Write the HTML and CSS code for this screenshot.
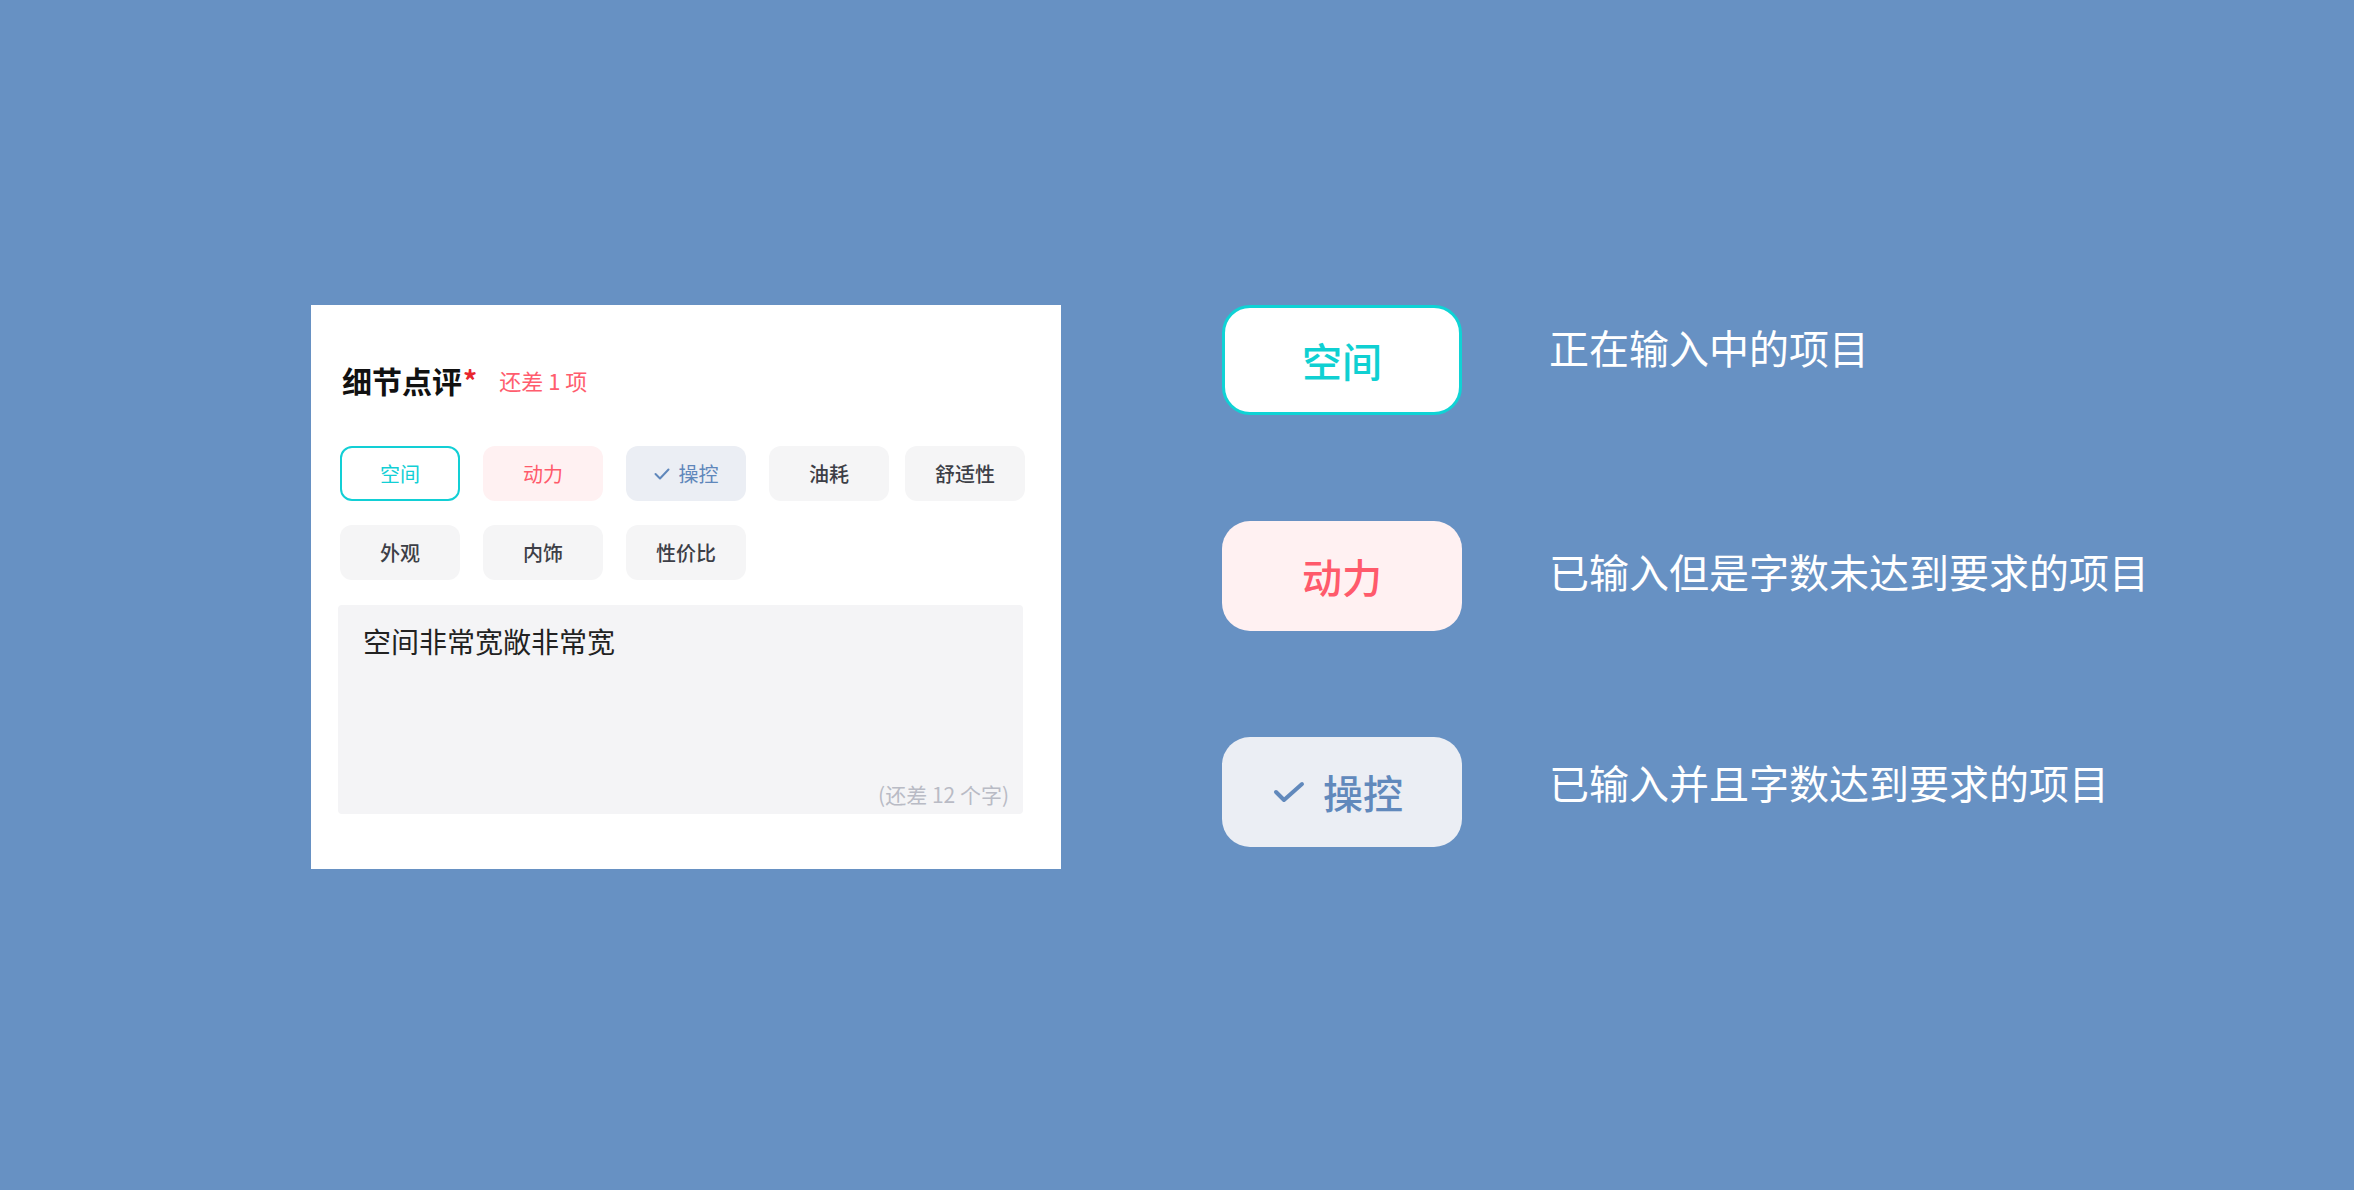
FILE: index.html
```html
<!DOCTYPE html>
<html lang="zh-CN">
<head>
<meta charset="utf-8">
<title>细节点评</title>
<link rel="stylesheet" href="styles.css">
</head>
<body>
<main class="page">
  <section class="card">
    <div class="card-title">
      <span class="title-main">细节点评</span><span class="title-star">*</span>
      <span class="title-hint">还差 1 项</span>
    </div>
    <div class="tags">
      <span class="tag tag-active">空间</span>
      <span class="tag tag-short">动力</span>
      <span class="tag tag-done"><svg class="check" width="16" height="12" viewBox="0 0 16 12"><polyline points="1.5,6 6,10.5 14.5,1.5" fill="none" stroke="currentColor" stroke-width="2" stroke-linecap="round" stroke-linejoin="round"/></svg>操控</span>
      <span class="tag">油耗</span>
      <span class="tag tag-last">舒适性</span>
      <span class="tag">外观</span>
      <span class="tag">内饰</span>
      <span class="tag">性价比</span>
    </div>
    <div class="input-box">
      <div class="input-text">空间非常宽敞非常宽</div>
      <div class="input-count">(还差 12 个字)</div>
    </div>
  </section>

  <section class="legend">
    <div class="legend-row row-1">
      <span class="big-tag big-active">空间</span>
      <span class="legend-text">正在输入中的项目</span>
    </div>
    <div class="legend-row row-2">
      <span class="big-tag big-short">动力</span>
      <span class="legend-text">已输入但是字数未达到要求的项目</span>
    </div>
    <div class="legend-row row-3">
      <span class="big-tag big-done"><svg class="big-check" width="32" height="22" viewBox="0 0 32 22"><polyline points="3,11 11,19 29,3" fill="none" stroke="currentColor" stroke-width="4" stroke-linecap="round" stroke-linejoin="round"/></svg>操控</span>
      <span class="legend-text">已输入并且字数达到要求的项目</span>
    </div>
  </section>
</main>
</body>
</html>
```
FILE: styles.css
```css
html, body {
  margin: 0;
  padding: 0;
}
body {
  width: 2354px;
  height: 1190px;
  background: #6791c3;
  font-family: "Noto Sans CJK SC", "Noto Sans", sans-serif;
  overflow: hidden;
}
.page {
  display: flex;
  align-items: flex-start;
  padding: 305px 0 0 311px;
}

/* ---------- card ---------- */
.card {
  width: 750px;
  box-sizing: border-box;
  background: #ffffff;
  padding: 55px 28px 55px 27px;
}
.card-title {
  display: flex;
  align-items: center;
  height: 40px;
  padding-left: 4px;
}
.title-main {
  font-size: 30px;
  font-weight: 700;
  color: #111111;
  line-height: 40px;
}
.title-star {
  font-size: 28px;
  font-weight: 700;
  color: #e8262d;
  line-height: 40px;
  margin-left: 1px;
}
.title-hint {
  font-size: 22px;
  color: #ff5d6e;
  margin-left: 22px;
  line-height: 40px;
}

.tags {
  display: flex;
  flex-wrap: wrap;
  gap: 24px 23px;
  margin-top: 46px;
  padding-left: 2px;
}
.tag {
  width: 120px;
  height: 55px;
  box-sizing: border-box;
  border-radius: 12px;
  background: #f5f5f6;
  color: #3d3f47;
  font-size: 20px;
  font-weight: 500;
  display: flex;
  align-items: center;
  justify-content: center;
}
.tag-last {
  margin-left: -7px;
}
.tag-active {
  background: #ffffff;
  border: 2px solid #12cfd5;
  color: #12cfd5;
  font-weight: 400;
}
.tag-short {
  background: #fff1f2;
  color: #ff5a6b;
  font-weight: 400;
}
.tag-done {
  background: #ebeef4;
  color: #5f87bb;
  font-weight: 400;
}
.check {
  margin-right: 9px;
  margin-top: 1px;
}

.input-box {
  margin-top: 25px;
  margin-right: 10px;
  height: 209px;
  box-sizing: border-box;
  background: #f4f4f6;
  border-radius: 4px;
  padding: 16px 14px 8px 25px;
  display: flex;
  flex-direction: column;
  justify-content: space-between;
}
.input-text {
  font-size: 28px;
  line-height: 40px;
  color: #222222;
}
.input-count {
  align-self: flex-end;
  font-size: 21px;
  line-height: 24px;
  color: #b9bbc5;
}

/* ---------- legend ---------- */
.legend {
  margin-left: 161px;
  display: flex;
  flex-direction: column;
  gap: 106px;
}
.legend-row {
  display: flex;
  align-items: center;
}
.big-tag {
  width: 240px;
  height: 110px;
  box-sizing: border-box;
  border-radius: 28px;
  display: flex;
  align-items: center;
  justify-content: center;
  font-size: 40px;
  font-weight: 500;
}
.big-active {
  background: #ffffff;
  border: 3px solid #0fd3d5;
  color: #0fd0d2;
}
.big-short {
  background: #fff1f2;
  color: #ff5a6b;
}
.big-done {
  background: #ebeef4;
  color: #6189bc;
}
.big-check {
  margin-right: 18px;
  margin-left: -8px;
}
.legend-text {
  margin-left: 87px;
  font-size: 40px;
  color: #ffffff;
  line-height: 56px;
  white-space: nowrap;
}
.row-1 .legend-text {
  margin-bottom: 26px;
}
.row-2 .legend-text {
  margin-bottom: 10px;
}
.row-3 .legend-text {
  margin-bottom: 20px;
}
```
